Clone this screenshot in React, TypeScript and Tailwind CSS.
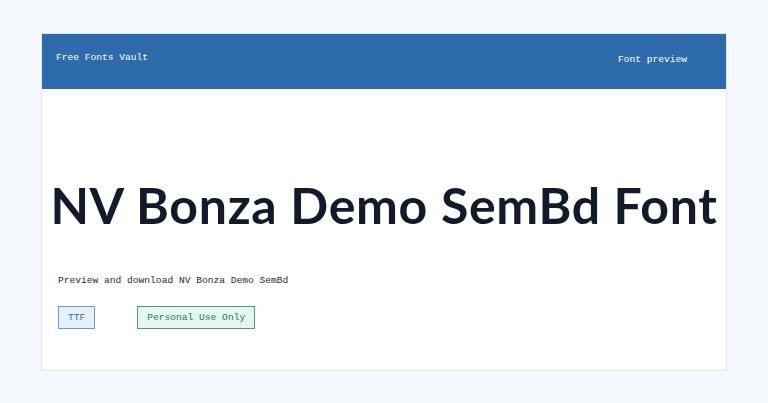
const mono = { fontFamily: '"Liberation Mono", "DejaVu Sans Mono", monospace' };

export default function App() {
  return (
    <div className="min-h-[403px] w-full bg-[#f5f8fd] px-[41px] py-[33px]">
      <div className="border border-[#e1e7f0] bg-white">
        <header
          className="flex h-[55px] items-center justify-between bg-[#2e6bab] pl-[14px] pr-[39px] text-white"
          style={mono}
        >
          <span className="mb-[6px] text-[9.6px]">Free Fonts Vault</span>
          <span className="mt-[-2px] text-[9.6px]">Font preview</span>
        </header>

        <div className="px-[16px] pb-[41px]">
          <h1
            className="mx-[-16px] whitespace-nowrap pt-[91px] text-center text-[50px] font-bold leading-none tracking-[0.7px] text-[#131a2a]"
            style={{ fontFamily: 'Lato, "Noto Sans", sans-serif' }}
          >
            NV Bonza Demo SemBd Font
          </h1>

          <p className="mt-[44px] text-[9.6px] text-[#1f2838]" style={mono}>
            Preview and download NV Bonza Demo SemBd
          </p>

          <div className="mt-[18px] flex gap-[42px] text-[9.6px] leading-[13px]" style={mono}>
            <span className="border border-[#6b9bd2] bg-[#e6f0fc] px-[9px] py-[4px] text-[#2e6bab]">
              TTF
            </span>
            <span className="border border-[#4f9c84] bg-[#e5f6f0] px-[9px] py-[4px] text-[#1e7a5e]">
              Personal Use Only
            </span>
          </div>
        </div>
      </div>
    </div>
  );
}
